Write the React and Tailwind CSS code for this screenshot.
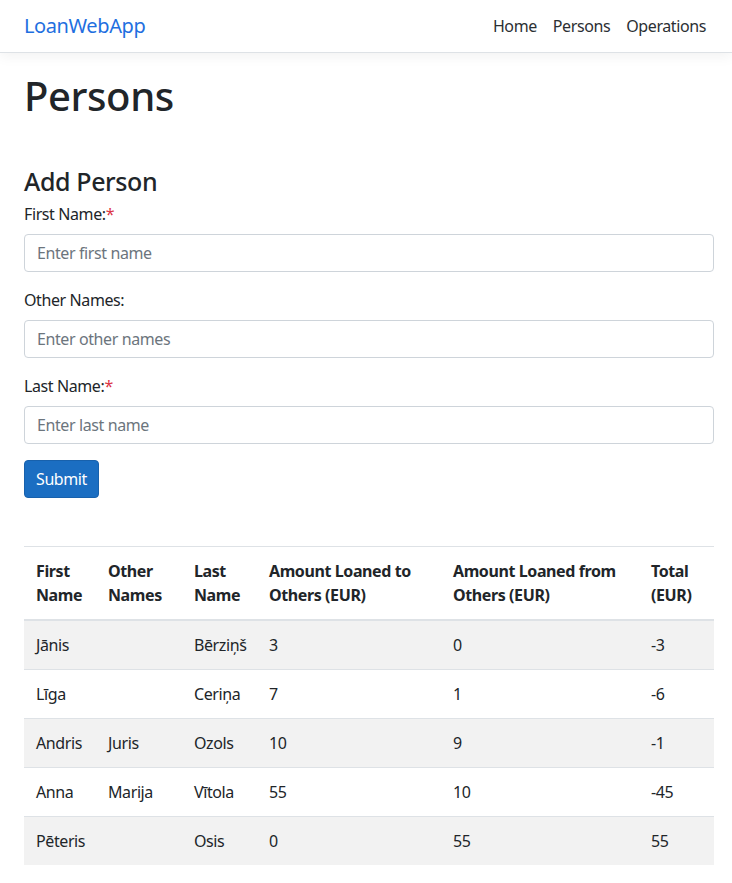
import React from 'react';

const people = [
  { first: 'Jānis', other: '', last: 'Bērziņš', to: 3, from: 0, total: -3 },
  { first: 'Līga', other: '', last: 'Ceriņa', to: 7, from: 1, total: -6 },
  { first: 'Andris', other: 'Juris', last: 'Ozols', to: 10, from: 9, total: -1 },
  { first: 'Anna', other: 'Marija', last: 'Vītola', to: 55, from: 10, total: -45 },
  { first: 'Pēteris', other: '', last: 'Osis', to: 0, from: 55, total: 55 },
];

const Field = ({ label, placeholder, required }) => (
  <div className="mb-4">
    <label className="block mb-2 leading-6">
      {label}
      {required && <span className="text-[#dc3545]">*</span>}
    </label>
    <input
      type="text"
      placeholder={placeholder}
      className="block w-full h-[38px] px-3 border border-[#ced4da] rounded-[4px] bg-white text-base tracking-[-0.025em] placeholder:text-[#6c757d] outline-none"
    />
  </div>
);

export default function App() {
  return (
    <div
      className="min-h-screen bg-white text-[#212529] text-base tracking-[-0.025em]"
      style={{ fontFamily: '"Noto Sans", "Open Sans", Arial, sans-serif' }}
    >
      {/* navbar */}
      <nav className="h-[53px] bg-white border-b border-[#dee2e6] shadow-[0_4px_12px_rgba(0,0,0,0.05)]">
        <div className="h-full pl-6 pr-[18px] flex items-center justify-between">
          <a href="#" className="text-[20px] text-[#1f6fe0]">LoanWebApp</a>
          <ul className="flex text-[#2b2f33]">
            <li><a href="#" className="px-2 py-2 block">Home</a></li>
            <li><a href="#" className="px-2 py-2 block">Persons</a></li>
            <li><a href="#" className="px-2 py-2 block">Operations</a></li>
          </ul>
        </div>
      </nav>

      <main className="pl-6 pr-[18px] pt-[19px] pb-4">
        <h1 className="text-[40px] leading-[1.2] font-medium mb-2">Persons</h1>

        {/* form */}
        <form className="mt-[46px]" onSubmit={(e) => e.preventDefault()}>
          <h3 className="text-[25px] leading-[1.2] font-medium mb-[6px]">Add Person</h3>
          <Field label="First Name:" placeholder="Enter first name" required />
          <Field label="Other Names:" placeholder="Enter other names" />
          <Field label="Last Name:" placeholder="Enter last name" required />
          <button
            type="submit"
            className="h-[38px] px-[11px] text-white bg-[#1b6ec2] border border-[#1861ac] rounded-[4px]"
          >
            Submit
          </button>
        </form>

        {/* table */}
        <table className="w-full mt-12 table-fixed border-collapse">
          <colgroup>
            <col className="w-[72px]" />
            <col className="w-[86px]" />
            <col className="w-[75px]" />
            <col className="w-[184px]" />
            <col className="w-[198px]" />
            <col className="w-[75px]" />
          </colgroup>
          <thead>
            <tr className="border-t border-[#dee2e6] border-b-2 border-b-[#dee2e6] text-left align-bottom">
              <th className="p-3 font-bold leading-6">First Name</th>
              <th className="p-3 font-bold leading-6">Other Names</th>
              <th className="p-3 font-bold leading-6">Last Name</th>
              <th className="p-3 font-bold leading-6">Amount Loaned to Others (EUR)</th>
              <th className="p-3 font-bold leading-6">Amount Loaned from Others (EUR)</th>
              <th className="p-3 font-bold leading-6">Total (EUR)</th>
            </tr>
          </thead>
          <tbody>
            {people.map((p, i) => (
              <tr
                key={p.first}
                className={`${i < people.length - 1 ? 'border-b border-[#dee2e6]' : ''} ${i % 2 === 0 ? 'bg-[#f2f2f2]' : 'bg-white'}`}
              >
                <td className="p-3 leading-6">{p.first}</td>
                <td className="p-3 leading-6">{p.other}</td>
                <td className="p-3 leading-6">{p.last}</td>
                <td className="p-3 leading-6">{p.to}</td>
                <td className="p-3 leading-6">{p.from}</td>
                <td className="p-3 leading-6">{p.total}</td>
              </tr>
            ))}
          </tbody>
        </table>
      </main>
    </div>
  );
}
